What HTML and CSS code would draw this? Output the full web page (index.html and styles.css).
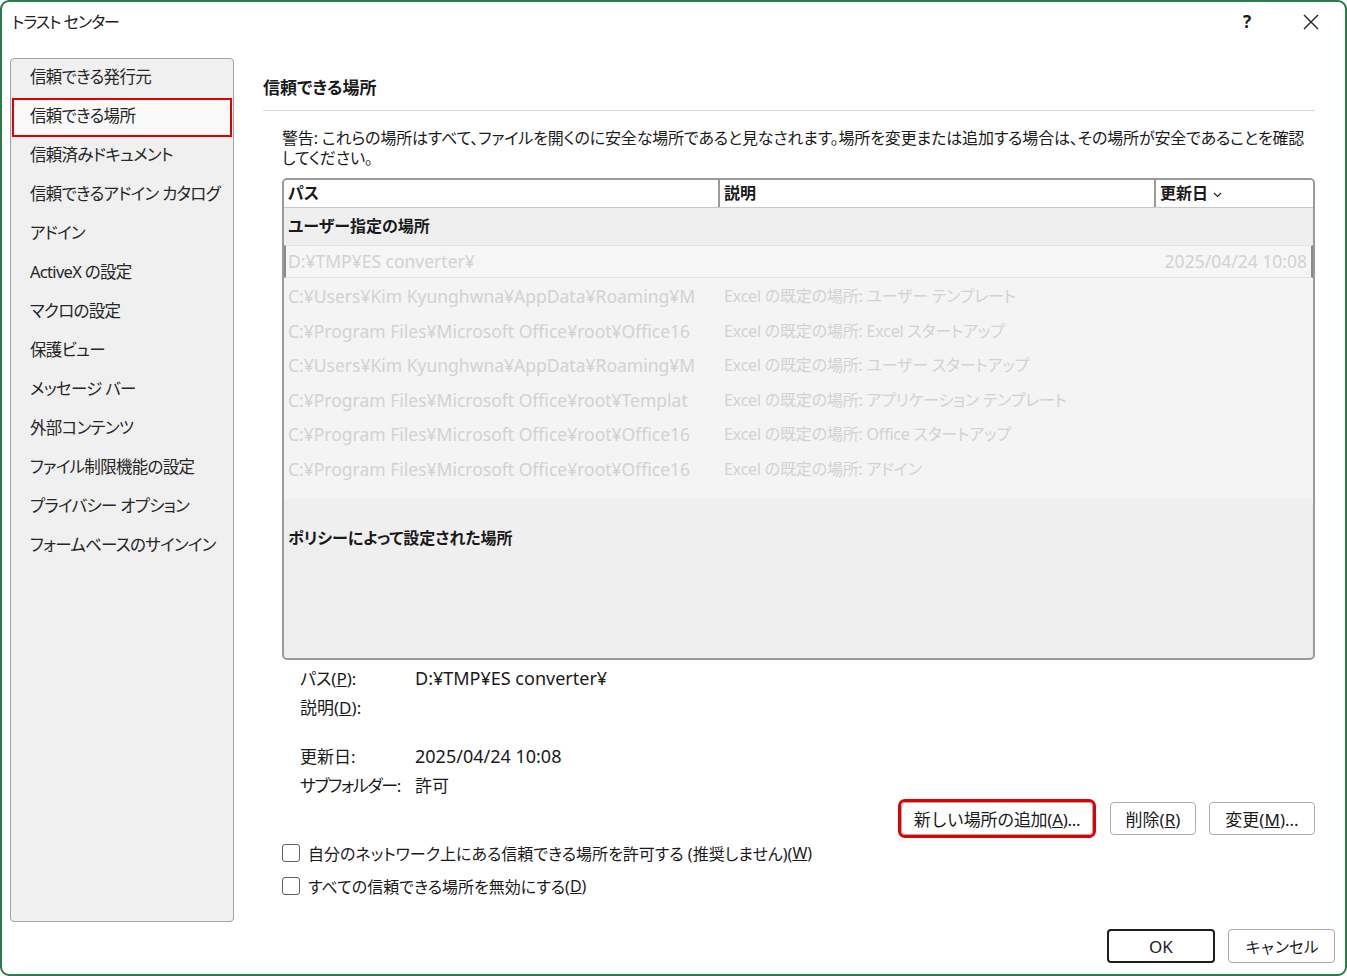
FILE: index.html
```html
<!DOCTYPE html>
<html lang="ja">

<head>
    <meta charset="UTF-8">
    <title>トラスト センター</title>
    <link rel="stylesheet" href="styles.css">
</head>

<body>

    <div class="window">
        <header class="titlebar">
            <span class="title">トラスト センター</span>
            <span class="help">?</span>
            <span class="close">
                <svg width="16" height="16" viewBox="0 0 16 16">
                    <path d="M1 1L15 15M15 1L1 15" stroke="#222" stroke-width="1.4" fill="none" />
                </svg>
            </span>
        </header>

        <div class="main">
            <nav class="sidebar">
                <div class="nav-item">信頼できる発行元</div>
                <div class="nav-item valgt">信頼できる場所</div>
                <div class="nav-item">信頼済みドキュメント</div>
                <div class="nav-item">信頼できるアドイン カタログ</div>
                <div class="nav-item">アドイン</div>
                <div class="nav-item">ActiveX の設定</div>
                <div class="nav-item">マクロの設定</div>
                <div class="nav-item">保護ビュー</div>
                <div class="nav-item">メッセージ バー</div>
                <div class="nav-item">外部コンテンツ</div>
                <div class="nav-item">ファイル制限機能の設定</div>
                <div class="nav-item">プライバシー オプション</div>
                <div class="nav-item">フォームベースのサインイン</div>
            </nav>

            <section class="content">
                <h1>信頼できる場所</h1>
                <p class="warning">警告: これらの場所はすべて、ファイルを開くのに安全な場所であると見なされます。場所を変更または追加する場合は、その場所が安全であることを確認してください。</p>

                <div class="table">
                    <div class="thead">
                        <div class="th">パス</div>
                        <div class="th">説明</div>
                        <div class="th last">更新日
                            <svg width="9" height="6" viewBox="0 0 9 6">
                                <path d="M1 1L4.5 4.5L8 1" stroke="#222" stroke-width="1.2" fill="none" />
                            </svg>
                        </div>
                    </div>
                    <div class="group">ユーザー指定の場所</div>
                    <div class="row selected">
                        <span>D:¥TMP¥ES converter¥</span>
                        <span></span>
                        <span class="date">2025/04/24 10:08</span>
                    </div>
                    <div class="rows">
                        <div class="row">
                            <span>C:¥Users¥Kim Kyunghwna¥AppData¥Roaming¥M</span>
                            <span class="desc">Excel の既定の場所: ユーザー テンプレート</span>
                            <span></span>
                        </div>
                        <div class="row">
                            <span>C:¥Program Files¥Microsoft Office¥root¥Office16</span>
                            <span class="desc">Excel の既定の場所: Excel スタートアップ</span>
                            <span></span>
                        </div>
                        <div class="row">
                            <span>C:¥Users¥Kim Kyunghwna¥AppData¥Roaming¥M</span>
                            <span class="desc">Excel の既定の場所: ユーザー スタートアップ</span>
                            <span></span>
                        </div>
                        <div class="row">
                            <span>C:¥Program Files¥Microsoft Office¥root¥Templat</span>
                            <span class="desc">Excel の既定の場所: アプリケーション テンプレート</span>
                            <span></span>
                        </div>
                        <div class="row">
                            <span>C:¥Program Files¥Microsoft Office¥root¥Office16</span>
                            <span class="desc">Excel の既定の場所: Office スタートアップ</span>
                            <span></span>
                        </div>
                        <div class="row">
                            <span>C:¥Program Files¥Microsoft Office¥root¥Office16</span>
                            <span class="desc">Excel の既定の場所: アドイン</span>
                            <span></span>
                        </div>
                    </div>
                    <div class="policy">ポリシーによって設定された場所</div>
                </div>

                <div class="details">
                    <span>パス(<u>P</u>):</span><span class="value">D:¥TMP¥ES converter¥</span>
                    <span>説明(<u>D</u>):</span><span></span>
                    <span class="spacer"></span><span class="spacer"></span>
                    <span>更新日:</span><span class="value">2025/04/24 10:08</span>
                    <span class="tight">サブフォルダー:</span><span>許可</span>
                </div>

                <div class="actions">
                    <button class="btn marked">新しい場所の追加(<u>A</u>)...</button>
                    <button class="btn delete">削除(<u>R</u>)</button>
                    <button class="btn change">変更(<u>M</u>)...</button>
                </div>

                <label class="check"><span class="box"></span>自分のネットワーク上にある信頼できる場所を許可する (推奨しません)(<u>W</u>)</label>
                <label class="check"><span class="box"></span>すべての信頼できる場所を無効にする(<u>D</u>)</label>
            </section>
        </div>

        <footer class="footer">
            <button class="btn ok">OK</button>
            <button class="btn cancel">キャンセル</button>
        </footer>
    </div>

</body>

</html>
```

FILE: styles.css
```css
* {
    box-sizing: border-box;
}

body {
    margin: 0;
    background: #ffffff;
    font-family: "Noto Sans", "Noto Sans CJK JP", sans-serif;
    font-feature-settings: "palt";
    color: #1a1a1a;
}

.window {
    width: 1347px;
    height: 976px;
    border: 2px solid #2a7a4a;
    border-radius: 9px;
    background: #ffffff;
    overflow: hidden;
}

/* titelbjælke */
.titlebar {
    display: flex;
    align-items: flex-start;
    height: 56px;
    padding: 7px 26px 0 10px;
    font-size: 17px;
    line-height: 26px;
}

.title {
    font-size: 16px;
    letter-spacing: -1px;
    color: #222;
}

.help {
    margin-left: auto;
    font-weight: 700;
    margin-right: 52px;
}

.close svg {
    display: block;
    margin-top: 5px;
}

.main {
    display: flex;
    height: 864px;
}

/* venstre menu */
.sidebar {
    margin-left: 8px;
    width: 224px;
    height: 864px;
    background: #f0f0f0;
    border: 1px solid #a3a3a3;
    border-radius: 4px;
}

.nav-item {
    height: 39px;
    line-height: 35px;
    padding-left: 19px;
    font-size: 16.5px;
    letter-spacing: -0.7px;
    color: #262626;
    white-space: nowrap;
}

.nav-item.valgt {
    margin: 0 1px;
    padding-left: 16px;
    border: 2px solid #e00000;
    line-height: 31px;
    background: #f9f9f9;
}

/* indhold */
.content {
    margin-left: 29px;
    width: 1052px;
}

h1 {
    margin: 18px 0 0;
    padding-bottom: 10px;
    border-bottom: 1px solid #dadada;
    font-size: 17px;
    line-height: 24px;
    font-weight: 700;
}

.warning {
    margin: 17px 4px 10px 19px;
    font-size: 16px;
    letter-spacing: -0.15px;
    line-height: 20px;
}

.table {
    display: flex;
    flex-direction: column;
    margin-left: 19px;
    width: 1033px;
    height: 482px;
    border: 2px solid #9a9a9a;
    border-radius: 5px;
    background: #efefef;
    overflow: hidden;
    font-size: 16px;
}

.thead {
    display: grid;
    grid-template-columns: 436px 436px 1fr;
    height: 28px;
    background: #ffffff;
    border-bottom: 1px solid #c8c8c8;
}

.th {
    padding-left: 4px;
    line-height: 27px;
    font-weight: 700;
    border-right: 2px solid #9a9a9a;
}

.th.last {
    border-right: none;
}

.th svg {
    margin-left: 1px;
    vertical-align: middle;
}

.group {
    height: 37px;
    line-height: 37px;
    padding-left: 4px;
    font-weight: 700;
}

.row {
    display: grid;
    grid-template-columns: 436px 436px 1fr;
    height: 34.5px;
    line-height: 34.5px;
    font-size: 17.5px;
    color: #d2d2d2;
}

.row span {
    padding-left: 4px;
    white-space: nowrap;
    overflow: hidden;
}

.row .desc {
    font-size: 16px;
    letter-spacing: -0.2px;
}

.row.selected {
    height: 33px;
    line-height: 31px;
    background: #f6f6f6;
    border-top: 1px solid #e3e3e3;
    border-bottom: 1px solid #e3e3e3;
    border-left: 2px solid #8a8a8a;
    border-right: 2px solid #8a8a8a;
}

.row.selected span:first-child {
    padding-left: 2px;
}

.row .date {
    text-align: right;
    padding-right: 4px;
}

.rows {
    height: 220px;
    padding-top: 1px;
    background: #f4f4f4;
}

.policy {
    flex: 1;
    padding: 28px 0 0 4px;
    line-height: 24px;
    font-weight: 700;
}

/* detaljer */
.details {
    display: grid;
    grid-template-columns: 115px 1fr;
    margin: 3.5px 0 0 37px;
    font-size: 17px;
    line-height: 29px;
}

.details .value {
    font-size: 18px;
}

.details .spacer {
    height: 20px;
}

.details .tight {
    letter-spacing: -1.4px;
}

.actions {
    display: flex;
    justify-content: flex-end;
    gap: 13px;
    margin-top: 2.5px;
}

.btn {
    height: 33px;
    padding: 0;
    border: 1px solid #acacac;
    border-radius: 4px;
    background: #ffffff;
    font-family: inherit;
    font-size: 17px;
    color: #1a1a1a;
}

.btn.marked {
    width: 192px;
    margin-right: 4px;
    outline: 3px solid #e00000;
    letter-spacing: -0.3px;
}

.btn.delete {
    width: 86px;
}

.btn.change {
    width: 106px;
}

.check {
    display: flex;
    align-items: center;
    height: 33px;
    margin-left: 19px;
    font-size: 16px;
}

.check:first-of-type {
    margin-top: 1px;
}

.box {
    width: 18px;
    height: 18px;
    margin-right: 8px;
    border: 1px solid #5f5f5f;
    border-radius: 3px;
    background: #ffffff;
}

.footer {
    display: flex;
    justify-content: flex-end;
    gap: 13px;
    padding: 7px 10px 0 0;
}

.btn.ok {
    width: 108px;
    height: 34px;
    border: 2px solid #1f1f1f;
}

.btn.cancel {
    width: 107px;
    height: 34px;
    border: 1px solid #a8a8a8;
    font-size: 15.5px;
    letter-spacing: -1px;
}
```
